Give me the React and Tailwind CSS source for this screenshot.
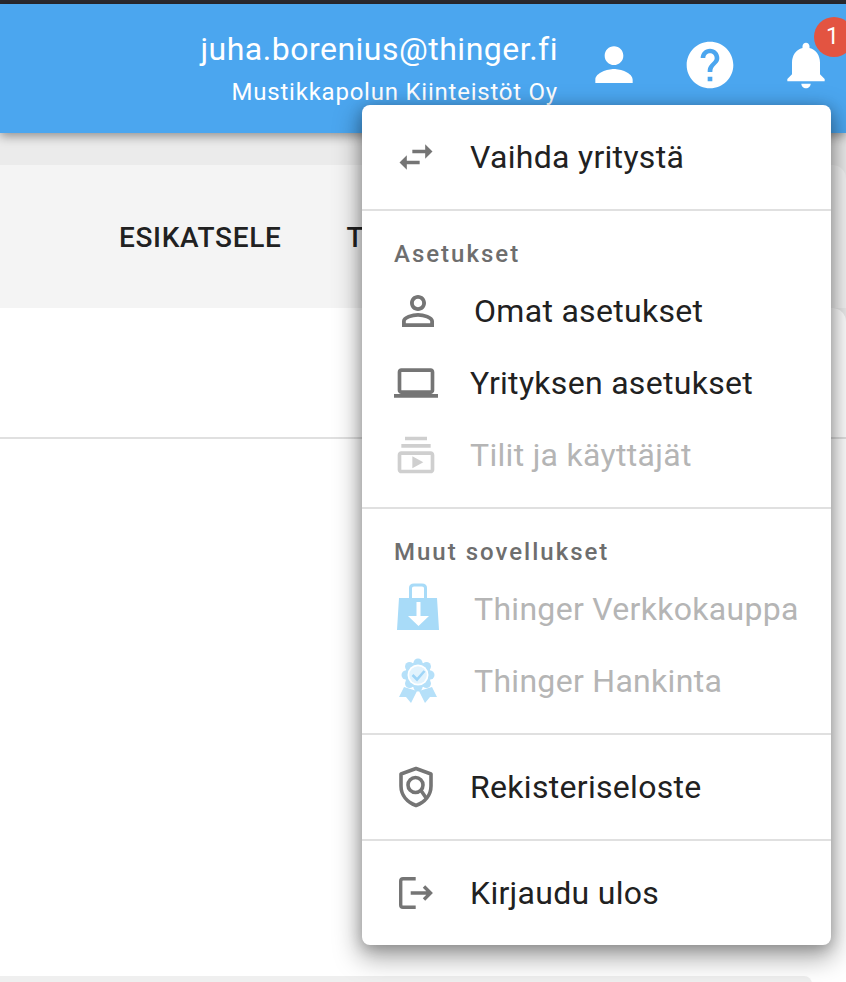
const MaterialIcon = ({ d, size = 44, className = '' }) => (
  <svg width={size} height={size} viewBox="0 0 24 24" fill="currentColor" className={`shrink-0 ${className}`}>
    <path d={d} />
  </svg>
)

const icons = {
  swap: 'M6.99 11L3 15l3.99 4v-3H14v-2H6.99v-3zM21 9l-3.99-4v3H10v2h7.01v3L21 9z',
  personOutline: 'M12 5.9c1.16 0 2.1.94 2.1 2.1s-.94 2.1-2.1 2.1S9.9 9.16 9.9 8s.94-2.1 2.1-2.1m0 9c2.97 0 6.1 1.46 6.1 2.1v1.1H5.9V17c0-.64 3.13-2.1 6.1-2.1M12 4C9.79 4 8 5.79 8 8s1.79 4 4 4 4-1.79 4-4-1.79-4-4-4zm0 9c-2.67 0-8 1.34-8 4v3h16v-3c0-2.66-5.33-4-8-4z',
  laptop: 'M20 18c1.1 0 1.99-.9 1.99-2L22 6c0-1.1-.9-2-2-2H4c-1.1 0-2 .9-2 2v10c0 1.1.9 2 2 2H0v2h24v-2h-4zM4 6h16v10H4V6z',
  subscriptions: 'M4 6h16v2H4zm2-4h12v2H6zm14 8H4c-1.1 0-2 .9-2 2v8c0 1.1.9 2 2 2h16c1.1 0 2-.9 2-2v-8c0-1.1-.9-2-2-2zm0 10H4v-8h16v8zm-10-7.27v6.53L16 16z',
  person: 'M12 12c2.21 0 4-1.79 4-4s-1.79-4-4-4-4 1.79-4 4 1.79 4 4 4zm0 1.7c-2.67 0-8 1.6-8 4.6v1.4h16v-1.4c0-3-5.33-4.6-8-4.6z',
  help: 'M12 2C6.48 2 2 6.48 2 12s4.48 10 10 10 10-4.48 10-10S17.52 2 12 2zm1 17h-2v-2h2v2zm2.07-7.75l-.9.92C13.45 12.9 13 13.5 13 15h-2v-.5c0-1.1.45-2.1 1.17-2.83l1.24-1.26c.37-.36.59-.86.59-1.41 0-1.1-.9-2-2-2s-2 .9-2 2H8c0-2.21 1.79-4 4-4s4 1.79 4 4c0 .88-.36 1.68-.93 2.25z',
  bell: 'M12 22c1.1 0 2-.9 2-2h-4c0 1.1.89 2 2 2zm6-6v-5c0-3.07-1.64-5.64-4.5-6.32V4c0-.83-.67-1.5-1.5-1.5s-1.5.67-1.5 1.5v.68C7.63 5.36 6 7.92 6 11v5l-2 2v1h16v-1l-2-2z',
}

const ShieldIcon = () => (
  <svg width="44" height="44" viewBox="0 0 44 44" fill="none" stroke="currentColor" strokeWidth="3.6" className="shrink-0">
    <path d="M22 3.5 L37 9 V21 C37 30 31 37 22 40.5 C13 37 7 30 7 21 V9 Z" strokeLinejoin="round" />
    <circle cx="21.5" cy="20" r="7.5" />
    <path d="M27 25.5 L32.5 33.5" />
  </svg>
)

const LogoutIcon = () => (
  <svg width="44" height="44" viewBox="0 0 44 44" fill="none" stroke="currentColor" strokeWidth="3.4" className="shrink-0">
    <path d="M21.7 7.7 H9 Q6.7 7.7 6.7 10 V34 Q6.7 36.3 9 36.3 H21.7" />
    <path d="M16.7 22 H36 M30 15.5 L36.5 22 L30 28.5" />
  </svg>
)

const BagIcon = () => (
  <svg width="48" height="48" viewBox="0 0 48 48" className="shrink-0 overflow-visible">
    <path d="M16.5 14 V3 Q16.5 0 20 0 H28 Q31.5 0 31.5 3 V14" fill="none" stroke="#a8dbf8" strokeWidth="3" />
    <path d="M5 13 H43 L45 45 H3 Z" fill="#a8dbf8" />
    <path d="M22.5 17 H26.5 V31 H35 L24.5 41 L14 31 H22.5 Z" fill="#fff" />
  </svg>
)

const scallops = [0, 45, 90, 135, 180, 225, 270, 315]

const AwardIcon = () => (
  <svg width="48" height="48" viewBox="0 0 48 48" className="shrink-0">
    <path d="M10 30 L5 40 L12 40 L17 46 L23 34 Z" fill="#b5e0f9" />
    <path d="M38 30 L43 40 L36 40 L31 46 L25 34 Z" fill="#b5e0f9" />
    {scallops.map(angle => (
      <circle
        key={angle}
        cx={24 + 12 * Math.cos((angle * Math.PI) / 180)}
        cy={18 + 12 * Math.sin((angle * Math.PI) / 180)}
        r="4.5"
        fill="#b5e0f9"
      />
    ))}
    <circle cx="24" cy="18" r="13" fill="#b5e0f9" />
    <circle cx="24" cy="18" r="10.5" fill="#fff" />
    <circle cx="24" cy="18" r="8.8" fill="#e2f3fd" />
    <path d="M18.5 18 L23 22.5 L30.5 14" fill="none" stroke="#9fd5f7" strokeWidth="2.6" />
  </svg>
)

const MenuRow = ({ icon, label, disabled }) => (
  <div className={`flex h-[72px] items-center gap-8 pl-8 text-[32px] tracking-[0.3px] ${disabled ? 'text-[#b5b5b5]' : 'text-[#212121]'}`}>
    <span className={`flex ${disabled ? 'text-[#cfcfcf]' : 'text-[#757575]'}`}>{icon}</span>
    <span>{label}</span>
  </div>
)

const SubHeader = ({ children }) => (
  <div className="h-16 pl-8 pt-[31px] text-[24px] leading-6 font-medium tracking-[2px] text-[#6e6e6e]">{children}</div>
)

const Divider = () => <div className="h-[2px] bg-[#e0e0e0]" />

const App = () => {
  return (
    <div className="relative h-[982px] w-[846px] overflow-hidden bg-white font-['Roboto',sans-serif]">
      <div className="h-1 bg-[#2b2a30]" />
      <header className="relative flex h-[129px] items-start justify-end bg-[#4ba6ef] pr-[12px] shadow-[0_3px_10px_rgba(0,0,0,0.4)]">
        <div className="mt-[25px] text-right text-white">
          <div className="text-[32px] leading-10 tracking-[0.5px]">juha.borenius@thinger.fi</div>
          <div className="mt-[5px] text-[24px] leading-9 tracking-[0.77px]">Mustikkapolun Kiinteistöt Oy</div>
        </div>
        <div className="mt-[33px] ml-[28px] flex gap-10 text-white">
          <MaterialIcon d={icons.person} size={56} />
          <MaterialIcon d={icons.help} size={56} />
          <MaterialIcon d={icons.bell} size={56} />
        </div>
      </header>

      <div className="bg-[#ebebeb] pt-8">
        <div className="flex h-[143px] items-center gap-[65px] rounded-tr-[14px] bg-[#f4f4f4] pt-[2px] pl-[119px] text-[28px] font-medium tracking-[0.67px] text-[#212121]">
          <span>ESIKATSELE</span>
          <span>T</span>
        </div>
        <div className="h-[668px] rounded-tr-[14px] bg-white">
          <div className="h-[131px] border-b-2 border-[#e0e0e0]" />
        </div>
      </div>
      <div className="h-2 w-[812px] rounded-tr-lg bg-[#efefef]" />

      <div className="absolute top-[17px] right-[-8px] z-20 flex h-10 w-10 items-center rounded-full bg-[#e35441] pl-[12px] text-[23px] text-white">1</div>

      <div className="absolute top-[105px] left-[362px] z-10 w-[469px] rounded-lg bg-white shadow-[0_10px_26px_3px_rgba(0,0,0,0.35),0_3px_14px_rgba(0,0,0,0.22)]">
        <div className="py-4">
          <MenuRow icon={<MaterialIcon d={icons.swap} />} label="Vaihda yritystä" />
        </div>
        <Divider />
        <div className="pb-4">
          <SubHeader>Asetukset</SubHeader>
          <MenuRow icon={<MaterialIcon d={icons.personOutline} size={48} />} label="Omat asetukset" />
          <MenuRow icon={<MaterialIcon d={icons.laptop} />} label="Yrityksen asetukset" />
          <MenuRow icon={<MaterialIcon d={icons.subscriptions} />} label="Tilit ja käyttäjät" disabled />
        </div>
        <Divider />
        <div className="pb-4">
          <SubHeader>Muut sovellukset</SubHeader>
          <MenuRow icon={<BagIcon />} label="Thinger Verkkokauppa" disabled />
          <MenuRow icon={<AwardIcon />} label="Thinger Hankinta" disabled />
        </div>
        <Divider />
        <div className="py-4">
          <MenuRow icon={<ShieldIcon />} label="Rekisteriseloste" />
        </div>
        <Divider />
        <div className="py-4">
          <MenuRow icon={<LogoutIcon />} label="Kirjaudu ulos" />
        </div>
      </div>
    </div>
  )
}

export default App
